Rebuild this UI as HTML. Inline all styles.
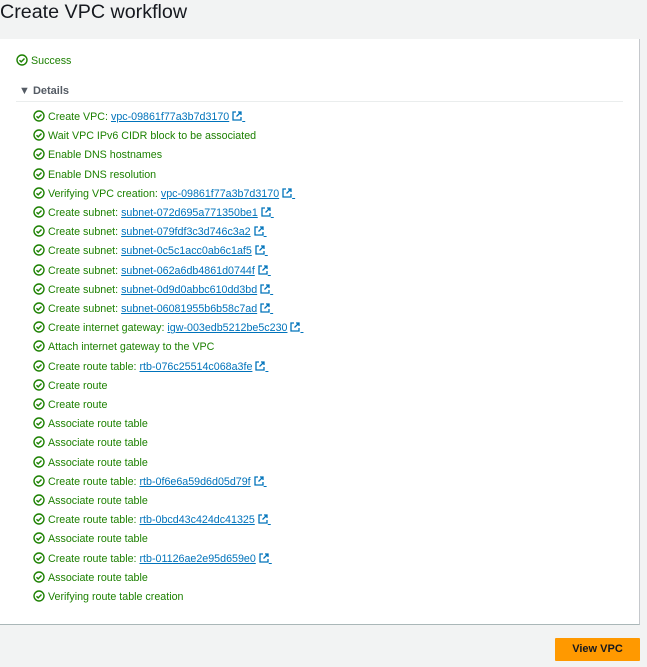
<!DOCTYPE html>
<html><head><style>
body{margin:0;width:647px;height:667px;background:#f2f3f3;font-family:"Liberation Sans",Arial,sans-serif;position:relative;overflow:hidden}
h1{position:absolute;left:0;top:1px;margin:0;font-weight:400;font-size:19.7px;color:#16191f}
.panel{position:absolute;left:0;top:39px;width:640px;height:586px;background:#fff;border-right:1px solid #c5c8cc;border-bottom:1px solid #aab7b8;box-sizing:border-box}
.row{position:absolute;font-size:10.7px;color:#1d8102;white-space:nowrap;line-height:13px}
.row > svg{position:absolute;left:0;top:-1px}
.row span{position:absolute;left:15px;top:0}
a{color:#0073bb;text-decoration:underline}
.ext{display:inline-block;vertical-align:-1px;margin-left:3px}
.det{position:absolute;left:19px;top:85px;font-size:11px;font-weight:700;color:#545b64}
.line{position:absolute;left:16px;top:101px;width:607px;height:1px;background:#eaeded}
.btn{position:absolute;left:555px;top:638px;width:85px;height:23px;background:#ff9900;color:#16191f;font-weight:700;font-size:11px;text-align:center;line-height:23px;border-radius:1px}
</style></head><body>
<h1>Create VPC workflow</h1>
<div class="panel"></div>
<div class="row" style="left:16px;top:55px"><svg width="12" height="12" viewBox="0 0 12 12"><circle cx="6" cy="6" r="5" fill="none" stroke="#1d8102" stroke-width="1.4"/><path d="M3.5 6.2l1.7 1.7 3.3-3.4" fill="none" stroke="#1d8102" stroke-width="1.4"/></svg><span>Success</span></div>
<div class="det">▼ Details</div>
<div class="line"></div>
<div id="rows"></div>
<div class="btn">View VPC</div>
<script>
var items=[["Create VPC: ","vpc-09861f77a3b7d3170"],["Wait VPC IPv6 CIDR block to be associated"],["Enable DNS hostnames"],["Enable DNS resolution"],["Verifying VPC creation: ","vpc-09861f77a3b7d3170"],["Create subnet: ","subnet-072d695a771350be1"],["Create subnet: ","subnet-079fdf3c3d746c3a2"],["Create subnet: ","subnet-0c5c1acc0ab6c1af5"],["Create subnet: ","subnet-062a6db4861d0744f"],["Create subnet: ","subnet-0d9d0abbc610dd3bd"],["Create subnet: ","subnet-06081955b6b58c7ad"],["Create internet gateway: ","igw-003edb5212be5c230"],["Attach internet gateway to the VPC"],["Create route table: ","rtb-076c25514c068a3fe"],["Create route"],["Create route"],["Associate route table"],["Associate route table"],["Associate route table"],["Create route table: ","rtb-0f6e6a59d6d05d79f"],["Associate route table"],["Create route table: ","rtb-0bcd43c424dc41325"],["Associate route table"],["Create route table: ","rtb-01126ae2e95d659e0"],["Associate route table"],["Verifying route table creation"]];
var ic='<svg width="12" height="12" viewBox="0 0 12 12"><circle cx="6" cy="6" r="5" fill="none" stroke="#1d8102" stroke-width="1.4"/><path d="M3.5 6.2l1.7 1.7 3.3-3.4" fill="none" stroke="#1d8102" stroke-width="1.4"/></svg>';
var ext='<svg class="ext" width="10" height="10" viewBox="0 0 10 10"><path d="M4 1H1v8h8V6M6 1h3v3M9 1L4.5 5.5" fill="none" stroke="#0073bb" stroke-width="1.3"/></svg>';
var h='';items.forEach(function(it,i){var y=111+i*19.2;h+='<div class="row" style="left:33px;top:'+y+'px">'+ic+'<span>'+it[0]+(it[1]?'<a>'+it[1]+ext+'&nbsp;</a>':'')+'</span></div>';});
document.getElementById('rows').innerHTML=h;
</script>
</body></html>
